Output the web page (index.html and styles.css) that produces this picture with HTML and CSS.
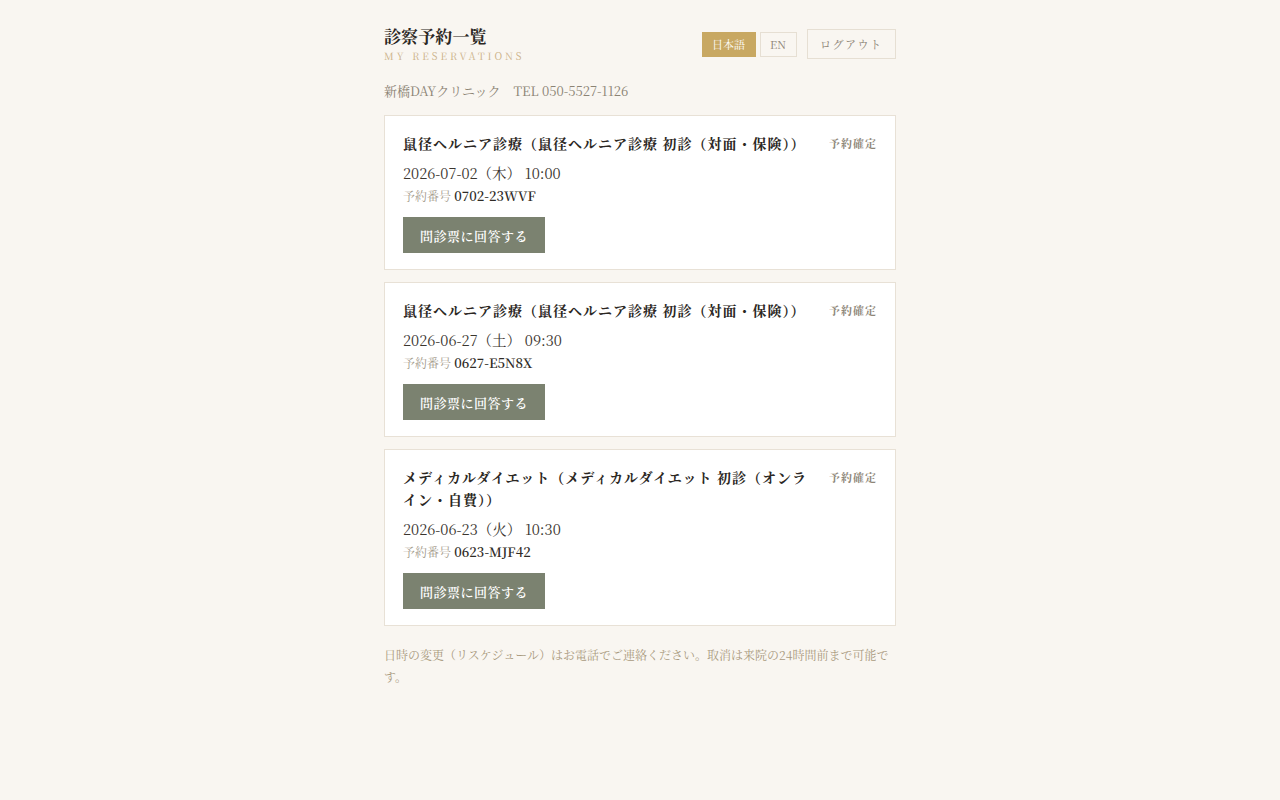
FILE: index.html
```html
<!DOCTYPE html>
<html lang="ja">
<head>
  <meta charset="UTF-8" />
  <meta name="viewport" content="width=device-width, initial-scale=1.0"/>
  <title>診察予約一覧</title>
  <link rel="stylesheet" href="styles.css">
</head>
<body>
  <div class="page">
    <header class="top">
      <div class="heading">
        <h1>診察予約一覧</h1>
        <div class="sub">MY RESERVATIONS</div>
      </div>
      <div class="tools">
        <button class="lang active">日本語</button>
        <button class="lang">EN</button>
        <button class="logout">ログアウト</button>
      </div>
    </header>

    <p class="clinic">新橋DAYクリニック　TEL 050-5527-1126</p>

    <div class="card">
      <div class="card-head">
        <h2>鼠径ヘルニア診療（鼠径ヘルニア診療 初診（対面・保険））</h2>
        <span class="status">予約確定</span>
      </div>
      <div class="date">2026-07-02（木） 10:00</div>
      <div class="number"><span class="label">予約番号</span> 0702-23WVF</div>
      <button class="answer">問診票に回答する</button>
    </div>

    <div class="card">
      <div class="card-head">
        <h2>鼠径ヘルニア診療（鼠径ヘルニア診療 初診（対面・保険））</h2>
        <span class="status">予約確定</span>
      </div>
      <div class="date">2026-06-27（土） 09:30</div>
      <div class="number"><span class="label">予約番号</span> 0627-E5N8X</div>
      <button class="answer">問診票に回答する</button>
    </div>

    <div class="card">
      <div class="card-head">
        <h2>メディカルダイエット（メディカルダイエット 初診（オンライン・自費））</h2>
        <span class="status">予約確定</span>
      </div>
      <div class="date">2026-06-23（火） 10:30</div>
      <div class="number"><span class="label">予約番号</span> 0623-MJF42</div>
      <button class="answer">問診票に回答する</button>
    </div>

    <p class="note">日時の変更（リスケジュール）はお電話でご連絡ください。取消は来院の24時間前まで可能です。</p>
  </div>
</body>
</html>
```

FILE: styles.css
```css
body {
  margin: 0;
  background-color: #f9f6f1;
  color: #2f2b26;
  font-family: "Noto Serif CJK JP", "Noto Serif JP", "Liberation Serif", "Noto Sans CJK JP", serif;
}

.page {
  width: 512px;
  margin: 0 auto;
  padding: 24px 0 40px;
}

.top {
  display: flex;
  justify-content: space-between;
  align-items: flex-start;
}

h1 {
  margin: 0;
  font-size: 17px;
  font-weight: 700;
  line-height: 24px;
  letter-spacing: 0.1px;
  color: #2b2723;
}

.sub {
  margin-top: 0;
  font-size: 10px;
  letter-spacing: 3px;
  color: #cbb187;
}

.tools {
  display: flex;
  align-items: center;
  margin-top: 5px;
}

button {
  font-family: inherit;
  cursor: pointer;
}

.lang {
  height: 25px;
  padding: 0 9.5px;
  margin-right: 4px;
  background: transparent;
  border: 1px solid #e6dfd3;
  color: #8d8577;
  font-size: 11px;
}

.lang.active {
  background-color: #c8a862;
  border-color: #c8a862;
  color: #fff;
}

.logout {
  height: 30px;
  margin-left: 6px;
  padding: 0 12.5px;
  background: transparent;
  border: 1px solid #e6dfd3;
  color: #8d8577;
  font-size: 11px;
  letter-spacing: 1.5px;
}

.clinic {
  margin: 18px 0 15px;
  font-size: 13px;
  color: #8b8374;
}

.card {
  background: #fff;
  border: 1px solid #e8e1d6;
  padding: 16px 18px 16px;
  margin-bottom: 12px;
}

.card-head {
  display: flex;
  justify-content: space-between;
  align-items: flex-start;
  gap: 20px;
}

h2 {
  margin: 0;
  font-size: 14px;
  font-weight: 700;
  line-height: 22px;
  letter-spacing: 1px;
  color: #2b2723;
}

.status {
  flex-shrink: 0;
  font-size: 11px;
  font-weight: 700;
  line-height: 22px;
  letter-spacing: 1px;
  color: #8d8577;
}

.date {
  margin-top: 8px;
  font-size: 14.5px;
  line-height: 22px;
  color: #3a352f;
}

.number {
  margin-top: 2px;
  font-size: 13px;
  font-weight: 600;
  letter-spacing: 0;
  line-height: 20px;
  color: #2f2b26;
}

.label {
  font-size: 12px;
  font-weight: 400;
  color: #a39a8b;
}

.answer {
  display: block;
  margin-top: 11px;
  height: 36px;
  padding: 0 17px;
  background-color: #7b8270;
  border: none;
  color: #fff;
  font-size: 13px;
  font-weight: 600;
  letter-spacing: 0.5px;
}

.note {
  margin: 18px 0 0;
  font-size: 12px;
  line-height: 22px;
  color: #a99a7e;
}
```
